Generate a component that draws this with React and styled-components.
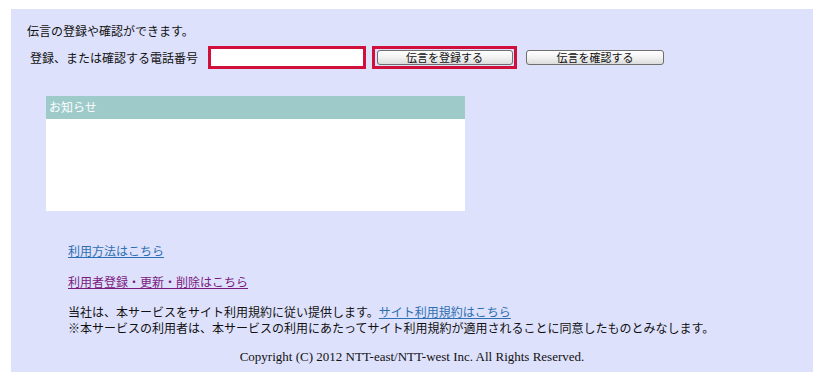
import React, { useState } from "react";
import styled, { createGlobalStyle } from "styled-components";

const GlobalStyle = createGlobalStyle`
    html, body {
        margin: 0;
        padding: 0;
        background: #ffffff;
    }
    body {
        font-family: "Noto Sans CJK JP", "Noto Sans", sans-serif;
        font-size: 12px;
        color: #111;
    }
`

const Panel = styled.div`
    margin: 9px 13px 7px 11px;
    height: 363px;
    box-sizing: border-box;
    background: #dee1fc;
    padding: 14px 0 0 0;
    display: flex;
    flex-direction: column;
`
const Intro = styled.p`
    margin: 0 0 0 16px;
    line-height: 16px;
`
const FormRow = styled.div`
    display: flex;
    align-items: center;
    margin: 7px 0 0 19px;
    height: 23px;
`
const Label = styled.span`
    line-height: 16px;
`
const PhoneInput = styled.input`
    box-sizing: border-box;
    width: 158px;
    height: 23px;
    margin-left: 10px;
    border: 3px solid #d0103a;
    background: #fff;
    outline: none;
    padding: 0 3px;
    font: inherit;
`
const Highlight = styled.span`
    box-sizing: border-box;
    display: flex;
    align-items: center;
    justify-content: center;
    width: 145px;
    height: 23px;
    margin-left: 6px;
    border: 3px solid #d0103a;
`
const ActionButton = styled.button`
    box-sizing: border-box;
    width: ${p => p.$width}px;
    height: 15px;
    margin-left: ${p => p.$gap}px;
    padding: 0;
    border: 1px solid #6f6f6f;
    border-radius: 3px;
    background: linear-gradient(#ffffff, #f2f2f2 50%, #dcdcdc);
    font-family: "Noto Sans CJK JP", sans-serif;
    font-size: 11px;
    line-height: 13px;
    color: #111;
    cursor: pointer;
`
const NoticeBox = styled.div`
    width: 419px;
    margin: 27px 0 0 35px;
    background: #fff;
`
const NoticeHeader = styled.div`
    height: 23px;
    background: #9ecbca;
    color: #fff;
    padding-left: 3px;
    line-height: 22px;
    font-size: 12px;
`
const NoticeBody = styled.div`
    height: 92px;
`
const LinkList = styled.div`
    display: flex;
    flex-direction: column;
    gap: 15px;
    margin: 32px 0 0 57px;
`
const TextLink = styled.a`
    color: ${p => (p.$visited ? "#7a1a7f" : "#2d6fb2")};
    text-decoration: underline;
    line-height: 16px;
    align-self: flex-start;
`
const Terms = styled.div`
    margin: 14px 0 0 57px;
    line-height: 16px;
`
const Copyright = styled.p`
    margin: 13px 0 0;
    text-align: center;
    font-family: "Liberation Serif", "Times New Roman", serif;
    font-size: 13px;
    line-height: 16px;
`

const App = () => {
    const [phone, setPhone] = useState("");

    return (
        <>
        <GlobalStyle />
        <Panel>
            <Intro>伝言の登録や確認ができます。</Intro>
            <FormRow>
                <Label>登録、または確認する電話番号</Label>
                <PhoneInput value={phone} onChange={(e) => setPhone(e.target.value)} />
                <Highlight>
                    <ActionButton $width={136} $gap={0}>伝言を登録する</ActionButton>
                </Highlight>
                <ActionButton $width={138} $gap={9}>伝言を確認する</ActionButton>
            </FormRow>
            <NoticeBox>
                <NoticeHeader>お知らせ</NoticeHeader>
                <NoticeBody />
            </NoticeBox>
            <LinkList>
                <TextLink href="#">利用方法はこちら</TextLink>
                <TextLink href="#" $visited>利用者登録・更新・削除はこちら</TextLink>
            </LinkList>
            <Terms>
                当社は、本サービスをサイト利用規約に従い提供します。<TextLink href="#">サイト利用規約はこちら</TextLink>
                <br />
                ※本サービスの利用者は、本サービスの利用にあたってサイト利用規約が適用されることに同意したものとみなします。
            </Terms>
            <Copyright>Copyright (C) 2012 NTT-east/NTT-west Inc. All Rights Reserved.</Copyright>
        </Panel>
        </>
    )
}

export default App;
